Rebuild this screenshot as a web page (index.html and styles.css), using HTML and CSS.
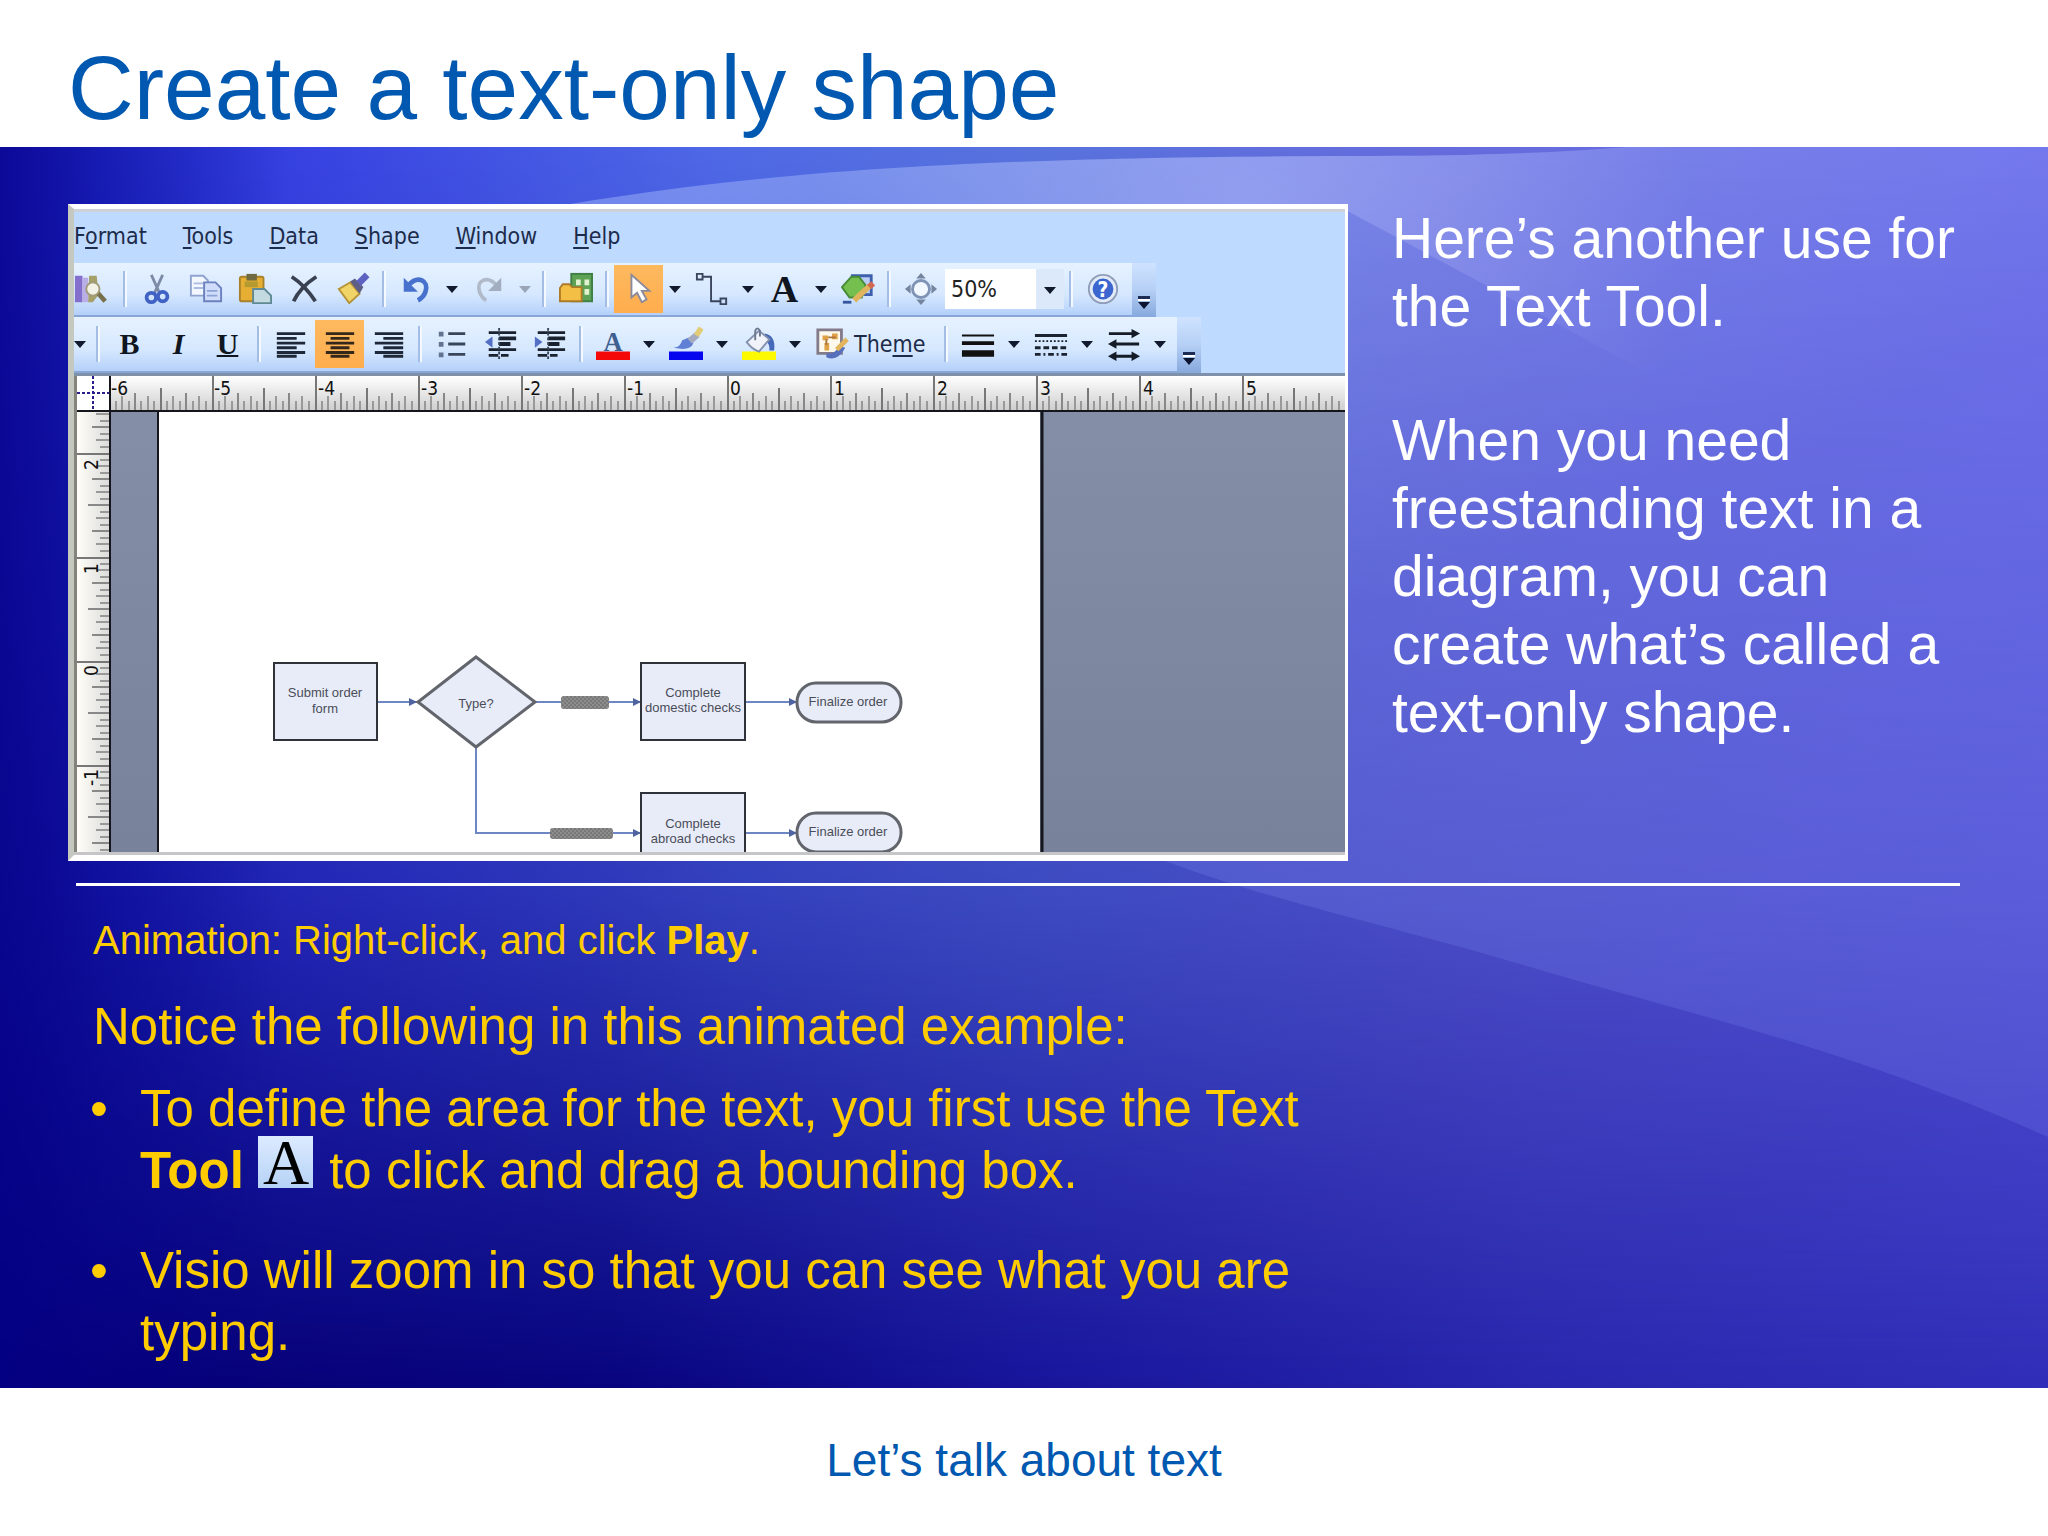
FILE: index.html
```html
<!DOCTYPE html>
<html lang="en">
  <head>
    <meta charset="UTF-8" />
    <meta name="viewport" content="width=device-width, initial-scale=1.0" />
    <title>Create a text-only shape</title>
    <link rel="stylesheet" href="styles.css">
  </head>
  <body>
    <svg class="symbols" aria-hidden="true">
      <symbol id="caret" viewBox="0 0 12 8"><path d="M0 1h12L6 8z" fill="currentColor" /></symbol>
      <symbol id="overflow" viewBox="0 0 14 14">
        <path d="M1 1h12v3H1z" fill="#1c2c55" />
        <path d="M1 4h12v2H1z" fill="#fff" />
        <path d="M1 7h12l-6 7z" fill="#0c1430" />
      </symbol>
    </svg>

    <header class="header">
      <h1>Create a text-only shape</h1>
    </header>

    <main class="slide">
      <svg class="backdrop" viewBox="0 0 2048 1241" preserveAspectRatio="none" aria-hidden="true">
        <defs>
          <linearGradient id="sky">
            <stop offset="0" stop-color="#2020c0" />
            <stop offset="0.05" stop-color="#2734d8" />
            <stop offset="0.15" stop-color="#3843e2" />
            <stop offset="0.35" stop-color="#4f69e6" />
            <stop offset="0.5" stop-color="#5873dd" />
            <stop offset="0.7" stop-color="#666cdb" />
            <stop offset="1" stop-color="#6868e6" />
          </linearGradient>
          <linearGradient id="deep">
            <stop offset="0" stop-color="#050074" />
            <stop offset="0.3" stop-color="#08047e" />
            <stop offset="0.5" stop-color="#17149a" />
            <stop offset="0.75" stop-color="#2826ac" />
            <stop offset="1" stop-color="#302eb8" />
          </linearGradient>
          <linearGradient id="fade" x2="0" y2="1">
            <stop offset="0" stop-color="#000" />
            <stop offset="0.6" stop-color="#6c6c6c" />
            <stop offset="1" stop-color="#fff" />
          </linearGradient>
          <linearGradient id="leftFade">
            <stop offset="0" stop-color="#040088" stop-opacity="0.7" />
            <stop offset="0.14" stop-color="#040088" stop-opacity="0" />
          </linearGradient>
          <linearGradient id="wedge" x1="0.2" x2="0.8" y2="1">
            <stop offset="0" stop-color="#b4c8ff" stop-opacity="0.4" />
            <stop offset="0.5" stop-color="#8c9cff" stop-opacity="0.2" />
            <stop offset="1" stop-color="#8c9cff" stop-opacity="0.17" />
          </linearGradient>
          <radialGradient id="glow" gradientUnits="userSpaceOnUse" cx="1250" cy="70" r="440">
            <stop offset="0" stop-color="#c4c8ff" stop-opacity="0.36" />
            <stop offset="1" stop-color="#c4c8ff" stop-opacity="0" />
          </radialGradient>
          <mask id="down"><rect width="2048" height="1241" fill="url(#fade)" /></mask>
        </defs>
        <rect width="2048" height="1241" fill="url(#sky)" />
        <rect width="2048" height="1241" fill="url(#deep)" mask="url(#down)" />
        <rect width="2048" height="1241" fill="url(#leftFade)" />
        <path d="M540 62C750 26 950 10 1350 9C1500 9 1620 4 1720 -10H2048V990C1850 902 1700 870 1530 820C1390 778 1260 752 1150 708Z" fill="url(#wedge)" />
        <path d="M540 62C750 26 950 10 1350 9C1500 9 1620 4 1720 -10H2048V470C1850 330 1600 200 1340 60Z" fill="url(#glow)" />
      </svg>

      <section class="top">
        <div class="visio">
          <nav class="menubar">
            <a href="#">F<u>o</u>rmat</a>
            <a href="#"><u>T</u>ools</a>
            <a href="#"><u>D</u>ata</a>
            <a href="#"><u>S</u>hape</a>
            <a href="#"><u>W</u>indow</a>
            <a href="#"><u>H</u>elp</a>
          </nav>

          <div class="toolbar">
            <div class="tools">
              <button class="tool cut-left" aria-label="Research">
                <svg viewBox="0 0 36 36"><path d="M1 4h8v28H1z" fill="#8470cc" /><path d="M9 6h6v26H9z" fill="#b9aee6" /><path d="M16 4h8l2 20-6 8h-5z" fill="#a5a06a" /><path d="M25 22l8 9" stroke="#77704a" stroke-width="5" /><circle cx="20" cy="18" r="7" fill="#f2f2e6" stroke="#a09a78" stroke-width="2" /></svg>
              </button>
              <span class="sep"></span>
              <button class="tool" aria-label="Cut">
                <svg viewBox="0 0 36 36"><path d="M12 3l9 20M24 3l-9 20" stroke="#7d8ba6" stroke-width="3" /><circle cx="12" cy="27" r="5" fill="none" stroke="#3f62c4" stroke-width="4" /><circle cx="24" cy="26" r="5" fill="none" stroke="#3f62c4" stroke-width="4" /></svg>
              </button>
              <button class="tool" aria-label="Copy">
                <svg viewBox="0 0 36 36"><path d="M2 4h13l5 5v16H2z" fill="#f2f6ff" stroke="#8fa3cf" stroke-width="2" /><path d="M5 12h10M5 17h10" stroke="#a9bce0" stroke-width="2" /><path d="M16 11h12l6 6v14H16z" fill="#cfdcfa" stroke="#6c80bd" stroke-width="2" /><path d="M19 20h11M19 25h11" stroke="#8ea3d8" stroke-width="2" /></svg>
              </button>
              <button class="tool" aria-label="Paste">
                <svg viewBox="0 0 36 36"><rect x="2" y="5" width="25" height="26" rx="2" fill="#e6ae33" stroke="#a8812c" stroke-width="2" /><path d="M9 2h11v7H9z" fill="#6f6a3f" /><path d="M7 10h14v6H7z" fill="#b59a2f" /><path d="M16 18h12l7 7v8H16z" fill="#c3dbe0" stroke="#5f8a93" stroke-width="2" /></svg>
              </button>
              <button class="tool" aria-label="Delete">
                <svg viewBox="0 0 36 36"><path d="M5 5q14 9 25 26M31 5Q14 16 7 31" fill="none" stroke="#39404f" stroke-width="4" /></svg>
              </button>
              <button class="tool" aria-label="Format Painter">
                <svg viewBox="0 0 36 36"><path d="M3 18l12-7 10 12-11 10z" fill="#f1d468" stroke="#b69336" stroke-width="2" /><path d="M15 10l5-3 9 9-4 7z" fill="#5f5f86" /><path d="M24 12l9-9" stroke="#5d62c0" stroke-width="7" /></svg>
              </button>
              <span class="sep"></span>
              <button class="tool" aria-label="Undo">
                <svg viewBox="0 0 36 36"><path d="M10 14C20 3 32 9 28 21q-2 6-8 9" fill="none" stroke="#4871cd" stroke-width="5" /><path d="M5 6v15h15z" fill="#4871cd" /></svg>
              </button>
              <button class="drop" aria-label="Undo list"><svg><use href="#caret" /></svg></button>
              <button class="tool" aria-label="Redo" disabled>
                <svg viewBox="0 0 36 36"><path d="M26 14C16 3 4 9 8 21q2 6 7 9" fill="none" stroke="#b0bac9" stroke-width="4" /><path d="M31 6v14H17z" fill="#a2adbf" /></svg>
              </button>
              <button class="drop" aria-label="Redo list" disabled><svg><use href="#caret" /></svg></button>
              <span class="sep"></span>
              <button class="tool" aria-label="Shapes">
                <svg viewBox="0 0 36 36"><rect x="13" y="2" width="22" height="29" fill="#5ea355" stroke="#3f7f45" stroke-width="2" /><path d="M18 8h5v6h-5zM27 8h5v6h-5zM27 18h5v6h-5z" fill="#e1f2d0" /><path d="M1 17l3-4h7l3 3h10v15H1z" fill="#f3bf45" stroke="#ad7b28" stroke-width="2" /></svg>
              </button>
              <span class="sep"></span>
              <button class="tool active" aria-label="Pointer Tool">
                <svg viewBox="0 0 36 36"><path d="M10 3v24l6-5 5 10 5-3-5-9h8z" fill="#fff" stroke="#8a8a9c" stroke-width="2" /></svg>
              </button>
              <button class="drop" aria-label="Pointer list"><svg><use href="#caret" /></svg></button>
              <button class="tool" aria-label="Connector Tool">
                <svg viewBox="0 0 36 36"><path d="M2 2h6v6H2zM27 28h6v6h-6zM8 5h9v26h10" fill="none" stroke="#39465e" stroke-width="2" /></svg>
              </button>
              <button class="drop" aria-label="Connector list"><svg><use href="#caret" /></svg></button>
              <button class="tool letter" aria-label="Text Tool">A</button>
              <button class="drop" aria-label="Text list"><svg><use href="#caret" /></svg></button>
              <button class="tool" aria-label="Drawing Tools">
                <svg viewBox="0 0 36 36"><path d="M12 4h20v20H12z" fill="#b9cdf4" stroke="#3e5fae" stroke-width="3" /><path d="M1 16L11 5h8l7 9-4 13H9z" fill="#74bf4d" stroke="#468a38" stroke-width="2" /><path d="M14 30L31 14" stroke="#dfb45c" stroke-width="6" /><path d="M30 16l4-4" stroke="#d2664e" stroke-width="6" /><path d="M2 32h9" stroke="#3656a0" stroke-width="3" /></svg>
              </button>
              <span class="sep"></span>
              <button class="tool" aria-label="Pan and Zoom">
                <svg viewBox="0 0 36 36"><circle cx="18" cy="18" r="9" fill="#f2f8ff" stroke="#7f93b5" stroke-width="3" /><path d="M18 1l5 6H13zM18 35l5-6H13zM1 18l6-5v10zM35 18l-6-5v10z" fill="#75859f" /></svg>
              </button>
              <label class="zoom" aria-label="Zoom">
                <select>
                  <option>50%</option>
                </select>
                <svg><use href="#caret" /></svg>
              </label>
              <span class="sep"></span>
              <button class="tool" aria-label="Help">
                <svg viewBox="0 0 36 36"><circle cx="18" cy="18" r="15" fill="#e3ebf8" stroke="#8f9db8" stroke-width="2" /><circle cx="18" cy="18" r="11" fill="#3c66cf" /><text x="18" y="26" class="help-mark">?</text></svg>
              </button>
            </div>
            <button class="overflow" aria-label="Toolbar options"><svg><use href="#overflow" /></svg></button>
          </div>

          <div class="toolbar format">
            <div class="tools">
              <button class="drop cut-left" aria-label="Font size list"><svg><use href="#caret" /></svg></button>
              <span class="sep"></span>
              <button class="tool letter bold" aria-label="Bold">B</button>
              <button class="tool letter italic" aria-label="Italic">I</button>
              <button class="tool letter underline" aria-label="Underline">U</button>
              <span class="sep"></span>
              <button class="tool" aria-label="Align Left">
                <svg viewBox="0 0 36 36"><path d="M3 7h30M3 12h21M3 17h30M3 22h21M3 27h30M3 31h21" stroke="#1e2838" stroke-width="3" /></svg>
              </button>
              <button class="tool active" aria-label="Center">
                <svg viewBox="0 0 36 36"><path d="M3 7h30M8 12h20M3 17h30M8 22h20M3 27h30M8 31h20" stroke="#33271a" stroke-width="3" /></svg>
              </button>
              <button class="tool" aria-label="Align Right">
                <svg viewBox="0 0 36 36"><path d="M3 7h30M12 12h21M3 17h30M12 22h21M3 27h30M12 31h21" stroke="#1e2838" stroke-width="3" /></svg>
              </button>
              <span class="sep"></span>
              <button class="tool" aria-label="Bullets">
                <svg viewBox="0 0 36 36"><path d="M14 7h18M14 18h18M14 29h18" stroke="#39465a" stroke-width="3" /><path d="M4 5h5v5H4zM4 16h5v5H4zM4 27h5v5H4z" fill="#627390" /></svg>
              </button>
              <button class="tool" aria-label="Decrease Indent">
                <svg viewBox="0 0 36 36"><path d="M5 6h29M5 24h29M5 30h10M18 30h8" stroke="#1a2230" stroke-width="3" /><path d="M16 12h18M16 18h12" stroke="#1a2230" stroke-width="4" /><path d="M16 1v34" stroke="#39465a" stroke-width="2" stroke-dasharray="3 2" /><path d="M1 16l8-6v12z" fill="#5470c4" /></svg>
              </button>
              <button class="tool" aria-label="Increase Indent">
                <svg viewBox="0 0 36 36"><path d="M5 6h29M5 24h29M5 30h10M18 30h8" stroke="#1a2230" stroke-width="3" /><path d="M16 12h18M16 18h12" stroke="#1a2230" stroke-width="4" /><path d="M16 1v34" stroke="#39465a" stroke-width="2" stroke-dasharray="3 2" /><path d="M10 16l-8-6v12z" fill="#5470c4" /></svg>
              </button>
              <span class="sep"></span>
              <button class="tool" aria-label="Text Color">
                <svg viewBox="0 0 36 36"><text x="18" y="25" class="color-letter">A</text><path d="M0 26h36v9H0z" fill="#f40808" /></svg>
              </button>
              <button class="drop" aria-label="Text Color list"><svg><use href="#caret" /></svg></button>
              <button class="tool" aria-label="Line Color">
                <svg viewBox="0 0 36 36"><path d="M0 26h36v9H0z" fill="#0505ee" /><path d="M1 21q10 3 13-7l7-3 5 6q-4 10-25 4z" fill="#5f80d4" /><path d="M22 15l8-7" stroke="#a3aac0" stroke-width="7" /><path d="M29 9l5-8" stroke="#e3cc76" stroke-width="6" /></svg>
              </button>
              <button class="drop" aria-label="Line Color list"><svg><use href="#caret" /></svg></button>
              <button class="tool" aria-label="Fill Color">
                <svg viewBox="0 0 36 36"><path d="M0 26h36v9H0z" fill="#fdf900" /><path d="M24 7q12 2 10 18h-5q1-8-6-12z" fill="#4568b8" /><path d="M5 16L18 4l11 9-11 13q-7-2-13-10z" fill="#f0f3fa" stroke="#8391ad" stroke-width="2" /><path d="M14 14V4q2-5 5 0v6" fill="none" stroke="#6b7890" stroke-width="2" /></svg>
              </button>
              <button class="drop" aria-label="Fill Color list"><svg><use href="#caret" /></svg></button>
              <button class="theme">
                <svg viewBox="0 0 36 36"><path d="M3 3h25v25H3z" fill="#fdf8ec" stroke="#847b8a" stroke-width="3" /><path d="M8 9h6v5H8zM18 7h6v6h-6zM10 17h5v8h-5z" fill="#dfa146" /><path d="M14 11h8M12 13v6" stroke="#a9743a" stroke-width="2" /><path d="M12 32q12 5 20-10l-6-2q-5 9-14 8z" fill="#5670bd" /><path d="M23 24L34 13" stroke="#e2b45c" stroke-width="5" /></svg>
                <span>The<u>m</u>e</span>
              </button>
              <span class="sep"></span>
              <button class="tool" aria-label="Line Weight">
                <svg viewBox="0 0 36 36"><path d="M1 9h34" stroke="#111" stroke-width="2" /><path d="M1 17h34" stroke="#111" stroke-width="4" /><path d="M1 28h34" stroke="#111" stroke-width="7" /></svg>
              </button>
              <button class="drop" aria-label="Line Weight list"><svg><use href="#caret" /></svg></button>
              <button class="tool" aria-label="Line Pattern">
                <svg viewBox="0 0 36 36"><g fill="none" stroke="#1b2230" stroke-width="3"><path d="M1 9h34" /><path d="M1 15h34" stroke-width="2" stroke-dasharray="2 2" /><path d="M1 22h34" stroke-dasharray="6 3" /><path d="M1 29h34" stroke-dasharray="6 3 2 3" /></g></svg>
              </button>
              <button class="drop" aria-label="Line Pattern list"><svg><use href="#caret" /></svg></button>
              <button class="tool" aria-label="Line Ends">
                <svg viewBox="0 0 36 36"><path d="M2 7h26M8 18h26M8 31h20" stroke="#151b27" stroke-width="3" /><path d="M26 2l9 5-9 5zM10 13l-9 5 9 5zM26 26l9 5-9 5zM10 26l-9 5 9 5z" fill="#151b27" /></svg>
              </button>
              <button class="drop" aria-label="Line Ends list"><svg><use href="#caret" /></svg></button>
            </div>
            <button class="overflow" aria-label="Toolbar options"><svg><use href="#overflow" /></svg></button>
          </div>

          <svg class="drawing" viewBox="0 0 1271 476">
            <defs>
              <linearGradient id="rulerH" x2="0" y2="1">
                <stop offset="0" stop-color="#fff" />
                <stop offset="1" stop-color="#cfcfcf" />
              </linearGradient>
              <linearGradient id="rulerV">
                <stop offset="0" stop-color="#fffef8" />
                <stop offset="1" stop-color="#dcdcda" />
              </linearGradient>
              <linearGradient id="desk" x2="0" y2="1">
                <stop offset="0" stop-color="#8590a8" />
                <stop offset="1" stop-color="#78839b" />
              </linearGradient>
              <pattern id="ticksH" x="35" y="0" width="103" height="34" patternUnits="userSpaceOnUse">
                <path d="M1 0v34" stroke="#777" stroke-width="2" />
                <path d="M52 12v22" stroke="#777" stroke-width="2" />
                <path d="M26 17v17M77 17v17" stroke="#888" stroke-width="2" />
                <path d="M7 25v9M13 20v14M20 25v9M32 25v9M39 20v14M45 25v9M58 25v9M64 20v14M71 25v9M84 25v9M90 20v14M97 25v9" stroke="#999" stroke-width="2" />
              </pattern>
              <pattern id="ticksV" x="3" y="77" width="32" height="104" patternUnits="userSpaceOnUse">
                <path d="M0 1h32" stroke="#777" stroke-width="2" />
                <path d="M11 52h21" stroke="#888" stroke-width="2" />
                <path d="M15 26h17M15 78h17" stroke="#888" stroke-width="2" />
                <path d="M23 7h9M19 13h13M23 20h9M23 33h9M19 39h13M23 46h9M23 59h9M19 65h13M23 72h9M23 85h9M19 91h13M23 98h9" stroke="#999" stroke-width="2" />
              </pattern>
              <pattern id="hatch" width="4" height="4" patternUnits="userSpaceOnUse">
                <path d="M0 0h4v4H0z" fill="#8d8d8d" />
                <path d="M0 0h2v2H0zM2 2h2v2H2z" fill="#787878" />
              </pattern>
            </defs>

            <rect width="1271" height="476" fill="url(#desk)" />
            <path d="M85 36h881v440H85z" fill="#fff" />
            <path d="M84 36v440" stroke="#14161c" stroke-width="2" />
            <path d="M968 36v440" stroke="#14161c" stroke-width="3" />

            <path d="M0 0h3v476H0z" fill="#84847c" />
            <path d="M3 0h1268v34H3z" fill="url(#rulerH)" />
            <path d="M35 0h1236v34H35z" fill="url(#ticksH)" />
            <path d="M3 34h32v442H3z" fill="url(#rulerV)" />
            <path d="M3 36h32v440H3z" fill="url(#ticksV)" />
            <path d="M3 0h32v34H3z" fill="#fff" />
            <path d="M19 0v34M3 17h32" stroke="#2a1d8c" stroke-width="2" stroke-dasharray="3 2" />
            <path d="M3 35h1268M36 0v476" stroke="#14161c" stroke-width="2" />

            <g class="ruler-text">
              <text x="37" y="19">-6</text>
              <text x="140" y="19">-5</text>
              <text x="244" y="19">-4</text>
              <text x="347" y="19">-3</text>
              <text x="450" y="19">-2</text>
              <text x="553" y="19">-1</text>
              <text x="656" y="19">0</text>
              <text x="760" y="19">1</text>
              <text x="863" y="19">2</text>
              <text x="966" y="19">3</text>
              <text x="1069" y="19">4</text>
              <text x="1172" y="19">5</text>
              <text transform="translate(24 94) rotate(-90)">2</text>
              <text transform="translate(24 198) rotate(-90)">1</text>
              <text transform="translate(24 300) rotate(-90)">0</text>
              <text transform="translate(24 410) rotate(-90)">-1</text>
            </g>

            <g class="links">
              <path d="M303 326h40M460 326h106M672 326h50M402 371v86h164M672 457h50" />
              <path class="tip" d="M335 322l8 4-8 4zM559 322l8 4-8 4zM715 322l8 4-8 4zM559 453l8 4-8 4zM715 453l8 4-8 4z" />
            </g>
            <rect x="487" y="320" width="48" height="13" rx="3" fill="url(#hatch)" />
            <rect x="476" y="452" width="63" height="11" rx="3" fill="url(#hatch)" />
            <g class="shapes">
              <rect x="200" y="287" width="103" height="77" />
              <path class="soft" d="M402 281l59 45-59 45-58-45z" />
              <rect x="567" y="287" width="104" height="77" />
              <rect class="soft" x="723" y="307" width="104" height="39" rx="19" />
              <rect x="567" y="417" width="104" height="77" />
              <rect class="soft" x="723" y="437" width="104" height="39" rx="19" />
            </g>
            <g class="shape-text">
              <text x="251" y="321">Submit order</text>
              <text x="251" y="337">form</text>
              <text x="402" y="332">Type?</text>
              <text x="619" y="321">Complete</text>
              <text x="619" y="336">domestic checks</text>
              <text x="774" y="330">Finalize order</text>
              <text x="619" y="452">Complete</text>
              <text x="619" y="467">abroad checks</text>
              <text x="774" y="460">Finalize order</text>
            </g>
          </svg>
        </div>

        <div class="intro">
          <p>Here’s another use for the Text Tool.</p>
          <p>When you need freestanding text in a diagram, you can create what’s called a text-only shape.</p>
        </div>
      </section>

      <hr class="divider" />

      <section class="notes">
        <p class="caption">Animation: Right-click, and click <b>Play</b>.</p>
        <p>Notice the following in this animated example:</p>
        <ul>
          <li>To define the area for the text, you first use the Text <b>Tool</b> <svg class="text-tool" viewBox="0 0 55 52" role="img" aria-label="Text Tool"><defs><linearGradient id="tile" x2="0" y2="1"><stop offset="0" stop-color="#dcebff" /><stop offset="1" stop-color="#b6d2f6" /></linearGradient></defs><rect width="55" height="52" fill="url(#tile)" /><text x="28" y="48">A</text></svg> to click and drag a bounding box.</li>
          <li>Visio will zoom in so that you can see what you are typing.</li>
        </ul>
      </section>
    </main>

    <footer class="footer">Let’s talk about text</footer>
  </body>
</html>
```
FILE: styles.css
```css
* {
  margin: 0;
  padding: 0;
  box-sizing: border-box;
}
body {
  display: flex;
  flex-direction: column;
  min-height: 100vh;
  background: #fff;
  color: #0058b0;
  font-family: 'Liberation Sans', Arial, sans-serif;
}
button {
  border: 0;
  background: none;
  color: inherit;
  font: inherit;
}
.symbols {
  position: absolute;
  width: 0;
  height: 0;
}

.header {
  padding: 36px 68px 7px;
}
.header h1 {
  font-size: 91px;
  font-weight: normal;
  line-height: 104px;
}

.slide {
  position: relative;
  flex: 1;
  padding: 57px 68px 22px;
  background: #1a1aac;
}
.backdrop {
  position: absolute;
  inset: 0;
  width: 100%;
  height: 100%;
}
.top,
.divider,
.notes {
  position: relative;
}
.top {
  display: grid;
  grid-template-columns: 1280fr 588fr;
  gap: 44px;
  align-items: start;
}

/* Visio window */
.visio {
  border: solid #fff;
  border-width: 5px 3px 6px 0;
  border-left: 6px solid #c4c8be;
  background: #bfdaff;
  box-shadow: inset 0 3px #ccd2d8;
  color: #1c2b4a;
  font-family: 'DejaVu Sans Condensed', 'DejaVu Sans', sans-serif;
  font-size: 23px;
  overflow: hidden;
}
.menubar {
  display: flex;
  gap: 36px;
  align-items: center;
  height: 54px;
}
.menubar a {
  color: inherit;
  text-decoration: none;
}
u {
  text-decoration-thickness: 2px;
  text-underline-offset: 3px;
}
.toolbar {
  display: flex;
  height: 54px;
}
.toolbar.format {
  height: 56px;
}
.tools {
  display: flex;
  align-items: center;
  padding-right: 5px;
  background: linear-gradient(#e6f2ff, #d6e8ff 60%, #b4d0fa);
  border-bottom: 2px solid #88a6d6;
}
.tool,
.drop {
  display: flex;
  flex: none;
  align-items: center;
  justify-content: center;
  width: 49px;
  height: 48px;
}
.tool svg,
.theme svg {
  width: 34px;
  height: 34px;
}
.tool.active {
  background: linear-gradient(#fdb95f, #ffad4d);
}
.tool.cut-left {
  width: 44px;
  justify-content: flex-start;
}
.drop {
  width: 24px;
  color: #111a2c;
}
.drop.cut-left {
  width: 17px;
  justify-content: flex-start;
}
.drop:disabled {
  color: #9aa6b8;
}
.drop svg,
.zoom svg {
  width: 12px;
  height: 8px;
}
.sep {
  flex: none;
  width: 14px;
  height: 36px;
  background: linear-gradient(90deg, #a3bde4 2px, #f4f9ff 2px) center / 4px 100% no-repeat;
}
.letter {
  color: #10161f;
  font-family: 'Liberation Serif', serif;
  font-size: 38px;
  font-weight: bold;
}
.bold,
.italic,
.underline {
  font-size: 30px;
}
.italic {
  font-style: italic;
}
.underline {
  text-decoration: underline;
  text-decoration-thickness: 2px;
}
.color-letter {
  fill: #3e5f8f;
  font-family: 'Liberation Serif', serif;
  font-size: 28px;
  font-weight: bold;
  text-anchor: middle;
}
.help-mark {
  fill: #fff;
  font-size: 22px;
  font-weight: bold;
  text-anchor: middle;
}
.zoom {
  position: relative;
  width: 119px;
  height: 40px;
  background: linear-gradient(90deg, #fff 91px, #dce9fb 91px);
}
.zoom select {
  width: 100%;
  height: 100%;
  padding: 0 6px;
  border: 0;
  appearance: none;
  background: none;
  color: #222;
  font: inherit;
}
.zoom svg {
  position: absolute;
  right: 8px;
  top: 17px;
  color: #111a2c;
}
.theme {
  display: flex;
  align-items: center;
  gap: 5px;
  width: 132px;
  padding-left: 8px;
}
.overflow {
  display: flex;
  align-items: flex-end;
  justify-content: center;
  width: 24px;
  padding-bottom: 8px;
  background: linear-gradient(#cfe3ff, #b5cff5 50%, #86a8dc);
}
.overflow svg {
  width: 14px;
  height: 14px;
}

.drawing {
  display: block;
  width: 100%;
  border-top: 3px solid #7f90ab;
  border-bottom: 3px solid #c6c6c8;
}
.ruler-text {
  fill: #111;
  font-size: 19px;
}
.links {
  fill: none;
  stroke: #6f86c4;
  stroke-width: 2px;
}
.links .tip {
  fill: #4e63a0;
  stroke: none;
}
.shapes {
  fill: #e8ecf8;
  stroke: #30323a;
  stroke-width: 2px;
}
.shapes .soft {
  stroke: #62656c;
  stroke-width: 3px;
}
.shape-text {
  fill: #4a4d58;
  font-family: 'Liberation Sans', Arial, sans-serif;
  font-size: 13px;
  text-anchor: middle;
}

.intro {
  color: #fff;
  font-size: 57px;
  line-height: 68px;
}
.intro p + p {
  margin-top: 66px;
}

.divider {
  height: 3px;
  margin: 22px 20px 0 8px;
  border: 0;
  background: #fff;
}

.notes {
  width: 67%;
  padding: 30px 0 0 25px;
  color: #fc0;
  font-size: 51px;
  line-height: 62px;
}
.caption {
  margin-bottom: 32px;
  font-size: 40px;
  line-height: 48px;
}
.notes ul {
  margin-top: 20px;
  list-style: none;
}
.notes li {
  position: relative;
  padding-left: 47px;
}
.notes li::before {
  content: '•';
  position: absolute;
  left: -3px;
}
.notes li + li {
  margin-top: 38px;
}
.text-tool {
  width: 55px;
  height: 52px;
  margin: -6px 2px 0 0;
  vertical-align: baseline;
  overflow: visible;
}
.text-tool text {
  fill: #000;
  font-family: 'Liberation Serif', serif;
  font-size: 64px;
  text-anchor: middle;
}

.footer {
  padding: 44px 0 48px;
  font-size: 46px;
  line-height: 56px;
  text-align: center;
}
```
